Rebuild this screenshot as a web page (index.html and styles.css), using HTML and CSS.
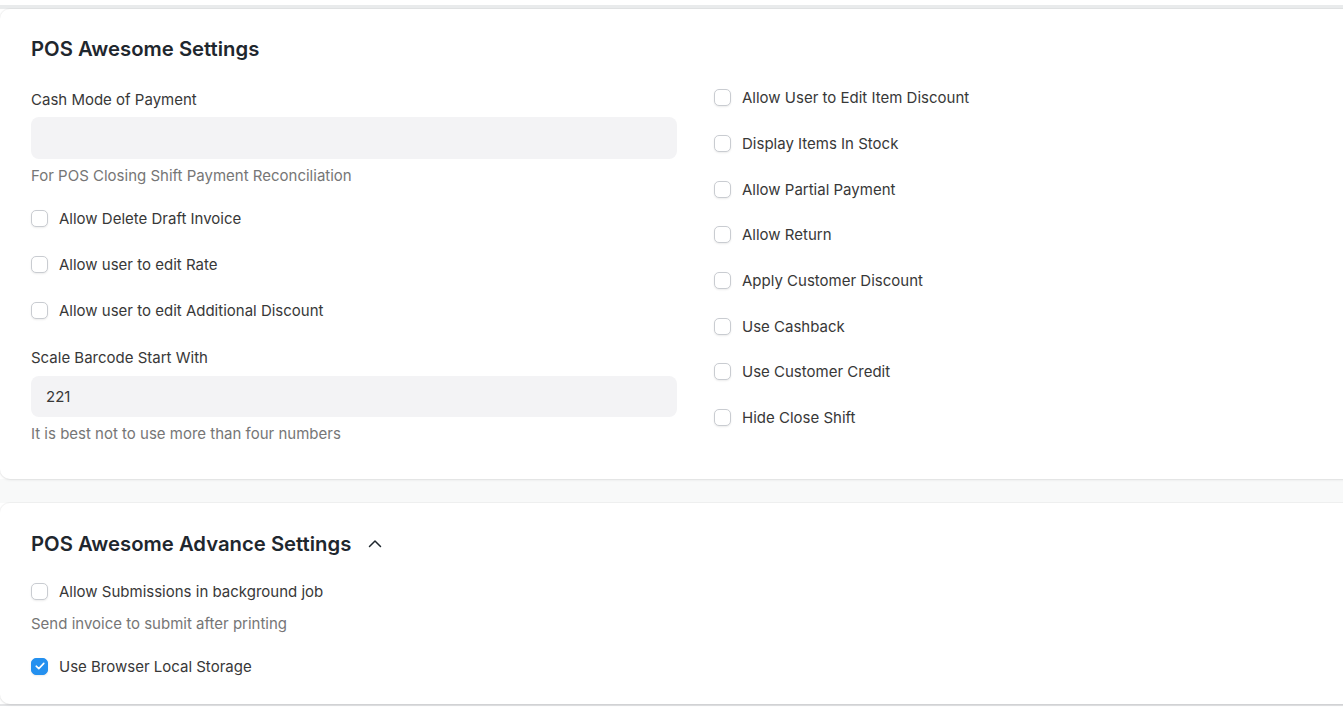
FILE: index.html
```html
<!DOCTYPE html>
<html>
<head>
<meta charset="utf-8">
<link rel="stylesheet" href="styles.css">
</head>
<body>
<div class="page">
  <div class="prev-end"></div>
  <div class="strip"></div>
  <section class="card card-main">
    <h2 class="title">POS Awesome Settings</h2>
    <div class="cols">
      <div class="col col-left">
        <div class="label">Cash Mode of Payment</div>
        <div class="input input-1"></div>
        <div class="desc desc-1">For POS Closing Shift Payment Reconciliation</div>
        <div class="checks-left">
          <label class="check"><span class="box"></span><span>Allow Delete Draft Invoice</span></label>
          <label class="check"><span class="box"></span><span>Allow user to edit Rate</span></label>
          <label class="check"><span class="box"></span><span>Allow user to edit Additional Discount</span></label>
        </div>
        <div class="label label-2">Scale Barcode Start With</div>
        <div class="input input-2">221</div>
        <div class="desc desc-2">It is best not to use more than four numbers</div>
      </div>
      <div class="col col-right">
        <label class="check rcheck"><span class="box"></span><span>Allow User to Edit Item Discount</span></label>
        <label class="check rcheck"><span class="box"></span><span>Display Items In Stock</span></label>
        <label class="check rcheck"><span class="box"></span><span>Allow Partial Payment</span></label>
        <label class="check rcheck"><span class="box"></span><span>Allow Return</span></label>
        <label class="check rcheck"><span class="box"></span><span>Apply Customer Discount</span></label>
        <label class="check rcheck"><span class="box"></span><span>Use Cashback</span></label>
        <label class="check rcheck"><span class="box"></span><span>Use Customer Credit</span></label>
        <label class="check rcheck"><span class="box"></span><span>Hide Close Shift</span></label>
      </div>
    </div>
  </section>
  <div class="gap"></div>
  <section class="card card-adv">
    <h2 class="title title-adv">POS Awesome Advance Settings
      <svg class="chev" width="16" height="16" viewBox="0 0 16 16"><path d="M2.5 10.5 L8 5 L13.5 10.5" fill="none" stroke="#1f272e" stroke-width="1.5" stroke-linecap="round" stroke-linejoin="round"/></svg>
    </h2>
    <label class="check adv-check"><span class="box"></span><span>Allow Submissions in background job</span></label>
    <div class="desc adv-desc">Send invoice to submit after printing</div>
    <label class="check adv-check2"><span class="box checked"><svg width="10" height="8" viewBox="0 0 10 8"><path d="M1.2 4.2 L3.8 6.6 L8.8 1.4" fill="none" stroke="#fff" stroke-width="1.6" stroke-linecap="round" stroke-linejoin="round"/></svg></span><span>Use Browser Local Storage</span></label>
  </section>
  <div class="bottom-line"></div>
</div>
</body>
</html>
```

FILE: styles.css
```css
* { box-sizing: border-box; }
html, body { margin: 0; padding: 0; }
body {
  background: #ffffff;
  font-family: Inter, "Noto Sans", sans-serif;
  color: #383838;
  overflow: hidden;
  width: 1343px;
  height: 717px;
}
.page { width: 1343px; }
.prev-end { height: 5px; background: #ffffff; }
.strip { height: 4px; background: #e9ebec; }
.card {
  background: #ffffff;
  width: 1400px;
  border-radius: 10px 0 0 10px;
  box-shadow: 0 0 0 1px rgba(0,0,0,0.03), 0 1px 3px rgba(0,0,0,0.08);
  position: relative;
}
.card-main { height: 470px; padding: 28px 31px 0 31px; }
.gap { height: 24px; background: #f8f9f9; }
.card-adv { height: 201px; padding: 29px 31px 0 31px; }
.bottom-line { height: 2px; background: #e3e4e6; }

.title {
  margin: 0;
  font-size: 20.3px;
  line-height: 24px;
  font-weight: 600;
  color: #1f272e;
  display: flex;
  align-items: center;
}
.chev { margin-left: 16px; }

.cols {
  display: grid;
  grid-template-columns: 646px 1fr;
  column-gap: 37px;
  margin-top: 14px;
}
.col-left { padding-top: 15px; }
.label { font-size: 15px; line-height: 20px; color: #383838; }
.input {
  margin-top: 8px;
  height: 42px;
  background: #f3f3f5;
  border-radius: 8px;
  font-size: 15px;
  line-height: 42px;
  padding: 0 15px;
  color: #383838;
}
.input-1 { margin-top: 7px; }
.input-2 { margin-top: 8px; height: 41px; line-height: 41px; }
.desc { margin-top: 6px; font-size: 15px; line-height: 20px; color: #767676; }
.desc-1 { margin-top: 7px; }
.desc-2 { margin-top: 7px; }
.checks-left { margin-top: 9px; }
.check {
  display: flex;
  align-items: center;
  height: 46px;
  font-size: 15px;
  color: #383838;
  gap: 11px;
}
.rcheck { height: 45.7px; }
.box {
  width: 17px;
  height: 17px;
  border: 1px solid #c9ccd1;
  border-radius: 5px;
  background: #fff;
  box-shadow: 0 1px 2px rgba(0,0,0,0.08);
  flex: none;
  display: flex;
  align-items: center;
  justify-content: center;
}
.box.checked { background: #2490ef; border-color: #2490ef; }
.label-2 { margin-top: 15px; }

.adv-check { margin-top: 12px; height: 46px; }
.adv-desc { margin-top: 0; }
.adv-check2 { margin-top: 12px; height: 40px; }
```
